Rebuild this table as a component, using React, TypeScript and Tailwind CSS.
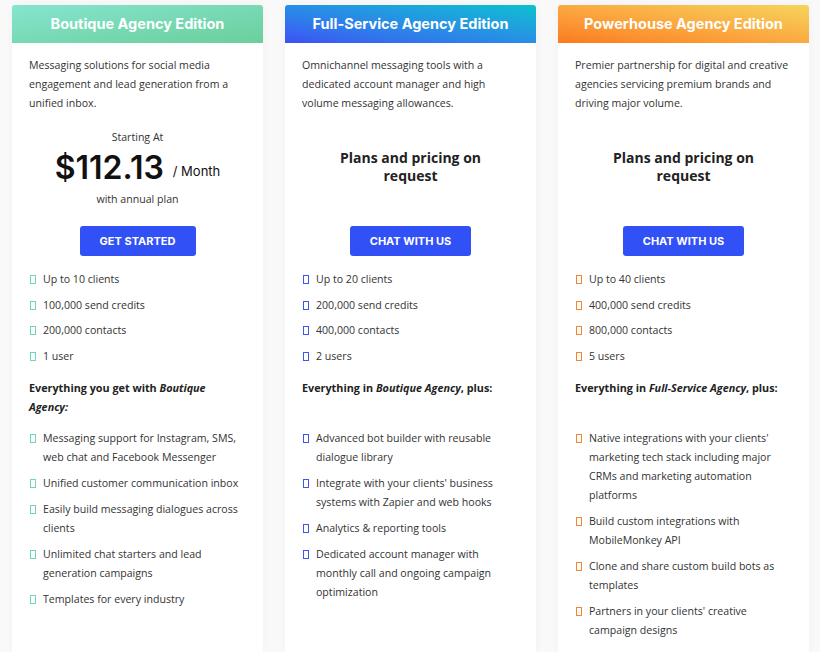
import React from "react";

type Plan = {
  title: string;
  headerClass: string;
  bulletClass: string;
  desc: string;
  limits: string[];
  intro: React.ReactNode;
  features: string[];
  cta: string;
  btnClass: string;
  pricing: "price" | "request";
};

const plans: Plan[] = [
  {
    title: "Boutique Agency Edition",
    headerClass: "bg-gradient-to-br from-[#86e4cf] to-[#6acf9b]",
    bulletClass: "border-[#6fd7b4]",
    desc: "Messaging solutions for social media engagement and lead generation from a unified inbox.",
    limits: ["Up to 10 clients", "100,000 send credits", "200,000 contacts", "1 user"],
    intro: (
      <>
        Everything you get with <i>Boutique Agency:</i>
      </>
    ),
    features: [
      "Messaging support for Instagram, SMS, web chat and Facebook Messenger",
      "Unified customer communication inbox",
      "Easily build messaging dialogues across clients",
      "Unlimited chat starters and lead generation campaigns",
      "Templates for every industry",
    ],
    cta: "GET STARTED",
    btnClass: "w-[116px]",
    pricing: "price",
  },
  {
    title: "Full-Service Agency Edition",
    headerClass: "bg-gradient-to-tr from-[#3d4ff5] to-[#0cc0cf]",
    bulletClass: "border-[#3f55f2]",
    desc: "Omnichannel messaging tools with a dedicated account manager and high volume messaging allowances.",
    limits: ["Up to 20 clients", "200,000 send credits", "400,000 contacts", "2 users"],
    intro: (
      <>
        Everything in <i>Boutique Agency</i>, plus:
      </>
    ),
    features: [
      "Advanced bot builder with reusable dialogue library",
      "Integrate with your clients' business systems with Zapier and web hooks",
      "Analytics & reporting tools",
      "Dedicated account manager with monthly call and ongoing campaign optimization",
    ],
    cta: "CHAT WITH US",
    btnClass: "w-[121px]",
    pricing: "request",
  },
  {
    title: "Powerhouse Agency Edition",
    headerClass: "bg-gradient-to-tr from-[#fb7a1f] to-[#f4d55c]",
    bulletClass: "border-[#f7822f]",
    desc: "Premier partnership for digital and creative agencies servicing premium brands and driving major volume.",
    limits: ["Up to 40 clients", "400,000 send credits", "800,000 contacts", "5 users"],
    intro: (
      <>
        Everything in <i>Full-Service Agency</i>, plus:
      </>
    ),
    features: [
      "Native integrations with your clients' marketing tech stack including major CRMs and marketing automation platforms",
      "Build custom integrations with MobileMonkey API",
      "Clone and share custom build bots as templates",
      "Partners in your clients' creative campaign designs",
    ],
    cta: "CHAT WITH US",
    btnClass: "w-[121px]",
    pricing: "request",
  },
];

function Bullet({ cls }: { cls: string }) {
  return <span className={`mt-[5px] block h-[9px] w-[6px] shrink-0 border ${cls}`} />;
}

function PlanCard({ plan }: { plan: Plan }) {
  return (
    <div className="w-[251px] shrink-0 rounded-t-[3px] bg-white shadow-[0_0_10px_rgba(0,0,0,0.04)]">
      <div
        className={`flex h-[38px] items-center justify-center rounded-t-[3px] text-[14.5px] font-bold text-white ${plan.headerClass}`}
        style={{ fontFamily: "Inter, 'Open Sans', sans-serif" }}
      >
        {plan.title}
      </div>
      <div className="px-[17px] pt-[13px] text-[10.6px] leading-[19px] text-[#333]">
        <p>{plan.desc}</p>

        {plan.pricing === "price" ? (
          <div className="flex h-[97px] flex-col items-center pt-[15px]">
            <div className="leading-[19px]">Starting At</div>
            <div className="mt-[1px] flex items-end text-[#111]">
              <span className="text-[32px] font-semibold leading-[40px]" style={{ fontFamily: "Inter, sans-serif" }}>
                $112.13
              </span>
              <span className="mb-[7px] ml-[9px] text-[13px]" style={{ fontFamily: "Inter, sans-serif" }}>
                / Month
              </span>
            </div>
            <div className="mt-[2px]">with annual plan</div>
          </div>
        ) : (
          <div className="h-[97px] pt-[36px] text-center text-[14px] font-bold leading-[18px] text-[#222]">
            Plans and pricing on
            <br />
            request
          </div>
        )}

        <div className="mt-[16px] flex justify-center">
          <button
            className={`h-[30px] rounded-[3px] bg-[#3150f5] text-[11px] font-bold text-white ${plan.btnClass}`}
            style={{ fontFamily: "Inter, sans-serif" }}
          >
            {plan.cta}
          </button>
        </div>

        <ul className="mt-[14px] flex flex-col gap-[6.6px]">
          {plan.limits.map((l) => (
            <li key={l} className="flex gap-[7px] pl-[1px]">
              <Bullet cls={plan.bulletClass} />
              <span>{l}</span>
            </li>
          ))}
        </ul>

        <div className="mt-[12px] h-[37px] text-[10.8px] font-bold text-[#222]">{plan.intro}</div>

        <ul className="mt-[14px] flex flex-col gap-[7px] pb-[40px]">
          {plan.features.map((f) => (
            <li key={f} className="flex gap-[7px] pl-[1px]">
              <Bullet cls={plan.bulletClass} />
              <span>{f}</span>
            </li>
          ))}
        </ul>
      </div>
    </div>
  );
}

export default function App() {
  return (
    <div
      className="flex h-[652px] w-[820px] gap-[22px] overflow-hidden bg-[#f9f9f9] pl-[12px] pt-[5px]"
      style={{ fontFamily: "'Open Sans', sans-serif" }}
    >
      {plans.map((p) => (
        <PlanCard key={p.title} plan={p} />
      ))}
    </div>
  );
}
